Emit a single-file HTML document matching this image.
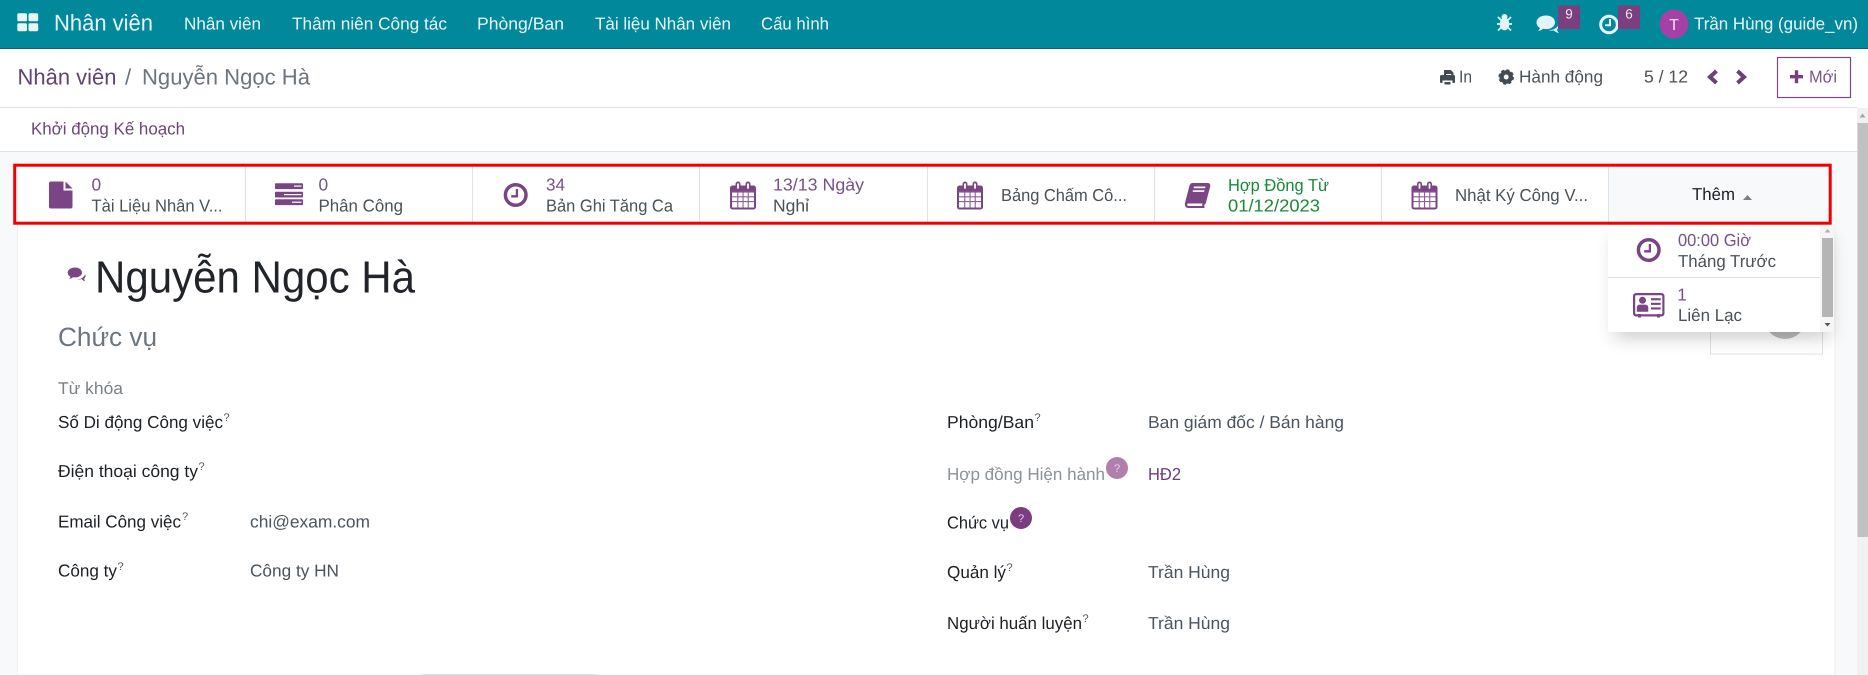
<!DOCTYPE html>
<html lang="vi">
<head>
<meta charset="utf-8">
<title>Nhân viên</title>
<style>
html,body{margin:0;padding:0;background:#fff;width:1868px;height:675px;overflow:hidden}
svg{display:block}
text{font-family:"Liberation Sans","Noto Sans CJK SC",sans-serif;font-size:17.3px;text-rendering:geometricPrecision}
.w{fill:#eaf7f8}
.d{fill:#4a5157}
.p{fill:#76508a}
.l{fill:#1c2024}
.v{fill:#4a545e}
.g{fill:#178a38}
.s{font-size:11px;fill:#4a545e}
.ic{fill:#7b4585}
</style>
</head>
<body>
<svg width="1868" height="675" viewBox="0 0 1868 675" xmlns="http://www.w3.org/2000/svg">
<defs>
<filter id="sh" x="-20%" y="-20%" width="140%" height="150%"><feGaussianBlur stdDeviation="9"/></filter>
<g id="cal">
  <path class="ic" d="M2.500 4H5.500V2.500a2.500 2.500 0 0 1 5 0V4h5V2.500a2.500 2.500 0 0 1 5 0V4h3A2.500 2.500 0 0 1 26 6.500V25.500A2.500 2.500 0 0 1 23.500 28H2.500A2.500 2.500 0 0 1 0 25.500V6.500A2.500 2.500 0 0 1 2.500 4Z"/>
  <path fill="#fff" d="M2 10h22v16H2z"/>
  <path fill="#8d5f97" d="M2 10h22v1.100H2zM2 14.800h22v1.100H2zM2 19.500h22v1.100H2zM7.200 10h1.100v16H7.200zM12.500 10h1.100v16h-1.100zM17.700 10h1.100v16h-1.100z"/>
  <path fill="#fff" d="M7.100 2.600a.9.9 0 0 1 1.800 0V6.500a.9.9 0 0 1-1.800 0zM17.100 2.600a.9.9 0 0 1 1.800 0V6.500a.9.9 0 0 1-1.800 0z"/>
</g>
<g id="clk">
  <circle cx="0" cy="0" r="10.300" fill="none" stroke="#7b4585" stroke-width="3.500"/>
  <path d="M1.200 -6V1.300H-4.500" fill="none" stroke="#7b4585" stroke-width="2.300"/>
</g>
</defs>

<!-- page backgrounds -->
<rect x="0" y="0" width="1868" height="675" fill="#fff"/>
<rect x="0" y="152" width="1857" height="523" fill="#f8f9fa"/>
<rect x="17.500" y="166" width="1817.500" height="509" fill="#fff" stroke="#eef0f2" stroke-width="1"/>

<!-- navbar -->
<rect x="0" y="0" width="1868" height="48" fill="#01899b"/>
<rect x="0" y="48" width="1868" height="1" fill="#135c68"/>
<g fill="#e8f6f7">
  <rect x="17.300" y="13.300" width="9.700" height="8" rx="1.600"/>
  <rect x="28.500" y="13.300" width="9.700" height="8" rx="1.600"/>
  <rect x="17.300" y="23.200" width="9.700" height="8" rx="1.600"/>
  <rect x="28.500" y="23.200" width="9.700" height="8" rx="1.600"/>
</g>
<text class="w" x="54" y="30.500" style="font-size:22.800px" textLength="99" lengthAdjust="spacingAndGlyphs">Nhân viên</text>
<text class="w" x="184" y="29.500" textLength="77" lengthAdjust="spacingAndGlyphs">Nhân viên</text>
<text class="w" x="292" y="29.500" textLength="155" lengthAdjust="spacingAndGlyphs">Thâm niên Công tác</text>
<text class="w" x="477" y="29.500" textLength="87" lengthAdjust="spacingAndGlyphs">Phòng/Ban</text>
<text class="w" x="595" y="29.500" textLength="136" lengthAdjust="spacingAndGlyphs">Tài liệu Nhân viên</text>
<text class="w" x="761" y="29.500" textLength="68" lengthAdjust="spacingAndGlyphs">Cấu hình</text>

<!-- bug -->
<g fill="#e2f4f5" stroke="#e2f4f5">
  <ellipse cx="1504.500" cy="24" rx="4.800" ry="6.300" stroke="none"/>
  <circle cx="1504.500" cy="17" r="3" stroke="none"/>
  <path d="M1498 17l3 3M1511 17l-3 3M1497 24h4M1512 24h-4M1498 30.500l3-3M1511 30.500l-3-3" stroke-width="1.800" fill="none"/>
</g>
<!-- chat -->
<path fill="#e2f4f5" d="M1546 15.500c-5.500 0-9.500 3-9.500 7 0 2.300 1.300 4.200 3.500 5.500-.3 1-1 2-2 2.800 2 0 3.800-.8 5-2 .9.200 1.900.300 3 .300 5.500 0 9-3 9-6.600 0-4-3.500-7-9-7z"/>
<path fill="#e2f4f5" d="M1548 30.500c1.500.3 4 .3 5.500-.3 1.300 1.300 3.500 2.500 5.500 3-1.200-1.300-1.900-2.800-2-4 1.200-.8 2-2 2-3.500 0-.5-.1-1-.3-1.500-1 3.500-5.500 6-10.700 6.300z"/>
<rect x="1558" y="5.500" width="22" height="23.500" fill="#7b3f80"/>
<text x="1569" y="18.700" text-anchor="middle" style="font-size:13.500px;fill:#eee">9</text>
<!-- activity clock -->
<circle cx="1609" cy="24.500" r="8.300" fill="none" stroke="#e6f6f6" stroke-width="3"/>
<path d="M1610 19v6.300h-5" fill="none" stroke="#e6f6f6" stroke-width="2"/>
<rect x="1618" y="5.500" width="22" height="23.500" fill="#7b3f80"/>
<text x="1629" y="18.700" text-anchor="middle" style="font-size:13.500px;fill:#eee">6</text>
<!-- avatar -->
<circle cx="1674" cy="24" r="14.500" fill="#a63fa6"/>
<text x="1674" y="30" text-anchor="middle" style="font-size:16px;fill:#f1e6f1">T</text>
<text class="w" x="1694" y="29.500" textLength="164" lengthAdjust="spacingAndGlyphs">Trần Hùng (guide_vn)</text>

<!-- control panel -->
<text x="17.500" y="84.500" style="font-size:22.300px;fill:#5e4470" textLength="99" lengthAdjust="spacingAndGlyphs">Nhân viên</text>
<text x="125" y="84.500" style="font-size:22.300px;fill:#6c757d">/</text>
<text x="142" y="84.500" style="font-size:22.300px;fill:#6c757d" textLength="168" lengthAdjust="spacingAndGlyphs">Nguyễn Ngọc Hà</text>

<!-- printer -->
<path fill="#454b53" d="M1444 70h6.800l2.700 2.700v3.300h-2.200V74h-5.300v2h-2zM1440 76.500a1.500 1.500 0 0 1 1.500-1.500h12a1.500 1.500 0 0 1 1.500 1.500v5.500a1 1 0 0 1-1 1h-1.500v-2.500h-10V83H1441a1 1 0 0 1-1-1zM1444.500 82h6v2.500h-6z"/>
<text class="d" x="1459" y="82.500" textLength="13" lengthAdjust="spacingAndGlyphs">In</text>
<!-- gear -->
<circle cx="1506.200" cy="77" r="4.600" fill="none" stroke="#454b53" stroke-width="4.300"/>
<circle cx="1506.200" cy="77" r="6.800" fill="none" stroke="#454b53" stroke-width="2" stroke-dasharray="3 2.340"/>
<text class="d" x="1519" y="82.500" textLength="84" lengthAdjust="spacingAndGlyphs">Hành động</text>
<text class="d" x="1644" y="82.500" textLength="44" lengthAdjust="spacingAndGlyphs">5 / 12</text>
<path d="M1716.500 71l-6.500 6 6.500 6" fill="none" stroke="#6f3f78" stroke-width="4"/>
<path d="M1737.500 71l6.500 6-6.500 6" fill="none" stroke="#6f3f78" stroke-width="4"/>
<rect x="1777.500" y="57.500" width="73" height="40" fill="#fff" stroke="#7b4a80" stroke-width="1.200"/>
<path d="M1790 75h13v3.400h-13zM1794.800 70.300h3.400v13h-3.400z" fill="#7b3f7f"/>
<text x="1809" y="82.500" style="fill:#7b5586" textLength="28" lengthAdjust="spacingAndGlyphs">Mới</text>

<rect x="0" y="107" width="1857" height="1" fill="#dee2e6"/>
<text x="31" y="134.500" style="fill:#6b4577" textLength="154" lengthAdjust="spacingAndGlyphs">Khởi động Kế hoạch</text>
<rect x="0" y="151" width="1857" height="1" fill="#dee2e6"/>

<!-- scrollbar -->
<rect x="1857" y="108" width="11" height="567" fill="#f1f1f1"/>
<rect x="1857.500" y="123" width="10.500" height="414" fill="#c1c1c1"/>
<path d="M1862.500 113.500l3 4h-6z" fill="#a3a3a3"/>

<!-- stat buttons -->
<rect x="1608" y="167" width="227" height="58" fill="#f8f9fa"/>
<g fill="#dee2e6">
  <rect x="245" y="167" width="1" height="56"/>
  <rect x="472" y="167" width="1" height="56"/>
  <rect x="699" y="167" width="1" height="56"/>
  <rect x="927" y="167" width="1" height="56"/>
  <rect x="1154" y="167" width="1" height="56"/>
  <rect x="1381" y="167" width="1" height="56"/>
  <rect x="1608" y="167" width="1" height="56"/>
</g>

<!-- file icon -->
<path class="ic" d="M51 181.500H63.500V190.500H72.500V206.500a2 2 0 0 1-2 2H51a2 2 0 0 1-2-2V183.500a2 2 0 0 1 2-2Z"/>
<path class="ic" d="M65.500 181.500L72.500 188.500H65.500Z"/>
<text class="p" x="91.500" y="190.500">0</text>
<text class="d" x="91.500" y="211.500" textLength="131" lengthAdjust="spacingAndGlyphs">Tài Liệu Nhân V...</text>

<!-- tasks icon -->
<rect class="ic" x="275" y="183.300" width="28" height="5.800" rx=".8"/>
<rect class="ic" x="275" y="191.700" width="28" height="5.800" rx=".8"/>
<rect class="ic" x="275" y="199.300" width="28" height="5.800" rx=".8"/>
<g fill="#fff">
  <rect x="294" y="185.500" width="7.500" height="1.200"/>
  <rect x="284" y="194" width="17.500" height="1.200"/>
  <rect x="292" y="201.600" width="9.500" height="1.200"/>
</g>
<text class="p" x="318.500" y="190.500">0</text>
<text class="d" x="318.500" y="211.500" textLength="84.500" lengthAdjust="spacingAndGlyphs">Phân Công</text>

<!-- overtime -->
<use href="#clk" x="515.700" y="195"/>
<text class="p" x="546" y="190.500" textLength="19" lengthAdjust="spacingAndGlyphs">34</text>
<text class="d" x="546" y="211.500" textLength="127" lengthAdjust="spacingAndGlyphs">Bản Ghi Tăng Ca</text>

<!-- leaves -->
<use href="#cal" x="730" y="181.500"/>
<text class="p" x="773" y="190.500" textLength="91" lengthAdjust="spacingAndGlyphs">13/13 Ngày</text>
<text class="d" x="773" y="211.500" textLength="36" lengthAdjust="spacingAndGlyphs">Nghỉ</text>

<!-- timesheet -->
<use href="#cal" x="957" y="181.500"/>
<text class="d" x="1001" y="201.200" textLength="126" lengthAdjust="spacingAndGlyphs">Bảng Chấm Cô...</text>

<!-- contract book -->
<path class="ic" d="M1191 183h17a2.500 2.500 0 0 1 2.300 3l-4.300 16.500c-.3 1.100-.9 1.900-1.500 2.300-.3.800-.3 1.500.2 2.400-.3.500-.7.800-1.200.8h-15c-2.800 0-4.200-2.500-3.500-5l4.500-17.500c.5-1.600 1.600-2.500 3.500-2.500z"/>
<path fill="#fff" d="M1194 186.500h11.500l-.4 1.700h-11.500zM1193 190.200h11.500l-.4 1.700h-11.500zM1187.500 203.500h15c-.3.900-.3 1.600-.1 2.500h-14c-1.200 0-1.400-1.600-.9-2.500z"/>
<text class="g" x="1228" y="191" textLength="101" lengthAdjust="spacingAndGlyphs">Hợp Đồng Từ</text>
<text class="g" x="1228" y="211.500" textLength="92" lengthAdjust="spacingAndGlyphs">01/12/2023</text>

<!-- worklog -->
<use href="#cal" x="1411.500" y="181.500"/>
<text class="d" x="1455" y="201.200" textLength="133" lengthAdjust="spacingAndGlyphs">Nhật Ký Công V...</text>

<!-- Thêm -->
<text class="l" x="1692" y="200.200" textLength="43" lengthAdjust="spacingAndGlyphs">Thêm</text>
<path d="M1743 200l4.500-5 4.500 5z" fill="#7c8084"/>

<!-- form content -->
<path class="ic" d="M75 267.500c-4 0-7.300 2.200-7.300 5.200 0 1.800 1.100 3.200 2.700 4-.2.800-.7 1.500-1.400 2 1.600 0 2.900-.6 3.900-1.500.7.100 1.400.200 2.100.200 4 0 7-2.200 7-4.700 0-3-3-5.200-7-5.200z"/>
<path class="ic" d="M77 279.500c.6 0 3.200.2 4.500-.5.900 1 2.500 2 4 2.500-.8-.8-1.300-1.900-1.300-2.900.9-.7 1.400-1.600 1.400-2.600 0-.6-.2-1.200-.5-1.700-.7 2.900-4 5-8.100 5.200z"/>
<text x="95" y="292.500" style="font-size:45px;fill:#212529" textLength="320" lengthAdjust="spacingAndGlyphs">Nguyễn Ngọc Hà</text>
<text x="58" y="346" style="font-size:26.500px;fill:#6c757d" textLength="99" lengthAdjust="spacingAndGlyphs">Chức vụ</text>
<text x="58" y="394" style="font-size:17px;fill:#7a8087" textLength="65" lengthAdjust="spacingAndGlyphs">Từ khóa</text>

<text class="l" x="58" y="428" textLength="165" lengthAdjust="spacingAndGlyphs">Số Di động Công việc</text>
<text class="s" x="223.500" y="421">?</text>
<text class="l" x="58" y="477" textLength="140" lengthAdjust="spacingAndGlyphs">Điện thoại công ty</text>
<text class="s" x="198.500" y="470">?</text>
<text class="l" x="58" y="527.300" textLength="123" lengthAdjust="spacingAndGlyphs">Email Công việc</text>
<text class="s" x="182" y="520">?</text>
<text class="v" x="250" y="527.300" textLength="120" lengthAdjust="spacingAndGlyphs">chi@exam.com</text>
<text class="l" x="58" y="576.700" textLength="59" lengthAdjust="spacingAndGlyphs">Công ty</text>
<text class="s" x="117.500" y="570">?</text>
<text class="v" x="250" y="576.700" textLength="89" lengthAdjust="spacingAndGlyphs">Công ty HN</text>

<text class="l" x="947" y="428" textLength="87" lengthAdjust="spacingAndGlyphs">Phòng/Ban</text>
<text class="s" x="1034.500" y="421">?</text>
<text class="v" x="1148" y="428" textLength="196" lengthAdjust="spacingAndGlyphs">Ban giám đốc / Bán hàng</text>
<text x="947" y="480" style="fill:#8b9299" textLength="158" lengthAdjust="spacingAndGlyphs">Hợp đồng Hiện hành</text>
<circle cx="1117" cy="468" r="11" fill="#b07fae"/>
<text x="1117" y="472" text-anchor="middle" style="font-size:11px;fill:#e6d5e6">?</text>
<text x="1148" y="480" style="fill:#6b3f7a" textLength="33" lengthAdjust="spacingAndGlyphs">HĐ2</text>
<text class="l" x="947" y="528.300" textLength="62" lengthAdjust="spacingAndGlyphs">Chức vụ</text>
<circle cx="1021" cy="518" r="11" fill="#7c3c80"/>
<text x="1021" y="522" text-anchor="middle" style="font-size:11px;fill:#e6d5e6">?</text>
<text class="l" x="947" y="578" textLength="59" lengthAdjust="spacingAndGlyphs">Quản lý</text>
<text class="s" x="1006.500" y="571">?</text>
<text class="v" x="1148" y="578" textLength="82" lengthAdjust="spacingAndGlyphs">Trần Hùng</text>
<text class="l" x="947" y="629" textLength="135" lengthAdjust="spacingAndGlyphs">Người huấn luyện</text>
<text class="s" x="1082.500" y="622">?</text>
<text class="v" x="1148" y="629" textLength="82" lengthAdjust="spacingAndGlyphs">Trần Hùng</text>

<rect x="421.500" y="674" width="175.500" height="1" fill="#dee2e6"/>

<!-- image box behind dropdown -->
<rect x="1710.500" y="300" width="112" height="54" fill="#fff" stroke="#dee2e6"/>
<circle cx="1785" cy="318" r="21" fill="#bdbdbd"/>

<!-- dropdown -->
<rect x="1614" y="236" width="216" height="102" fill="#000" opacity=".2" filter="url(#sh)"/>
<rect x="1608" y="225" width="226" height="107" fill="#fff"/>
<rect x="1820" y="225" width="14" height="107" fill="#f6f6f6"/>
<rect x="1822" y="238" width="11" height="79" fill="#b5b5b5"/>
<path d="M1827.500 229l3 3.500h-6z" fill="#b0b0b0"/>
<path d="M1827.500 326.500l3-3.500h-6z" fill="#555"/>
<rect x="1608" y="277" width="212" height="1" fill="#dee2e6"/>
<use href="#clk" x="1648.700" y="250"/>
<text class="p" x="1678" y="246.200" textLength="73" lengthAdjust="spacingAndGlyphs">00:00 Giờ</text>
<text class="d" x="1678" y="266.800" textLength="98" lengthAdjust="spacingAndGlyphs">Tháng Trước</text>
<!-- id card -->
<rect x="1634.100" y="294.100" width="29.300" height="21.300" rx="2" fill="#fff" stroke="#7b4585" stroke-width="2.200"/>
<rect class="ic" x="1638" y="314" width="3" height="3.500"/>
<rect class="ic" x="1657" y="314" width="3" height="3.500"/>
<circle class="ic" cx="1642.500" cy="300.300" r="3.500"/>
<path class="ic" d="M1636.800 311.800v-4a3 3 0 0 1 3-3.200h5.500a3 3 0 0 1 3 3.200v4z"/>
<rect class="ic" x="1651" y="298.200" width="9.700" height="2.100"/>
<rect class="ic" x="1651" y="302.800" width="9.700" height="2.100"/>
<rect class="ic" x="1651" y="307.400" width="9.700" height="2.100"/>
<text class="p" x="1677.300" y="300.500">1</text>
<text class="d" x="1678" y="321.200" textLength="64" lengthAdjust="spacingAndGlyphs">Liên Lạc</text>

<!-- red annotation box -->
<rect x="14.700" y="165.200" width="1815.500" height="58" fill="none" stroke="#f00000" stroke-width="3"/>
</svg>
</body>
</html>
